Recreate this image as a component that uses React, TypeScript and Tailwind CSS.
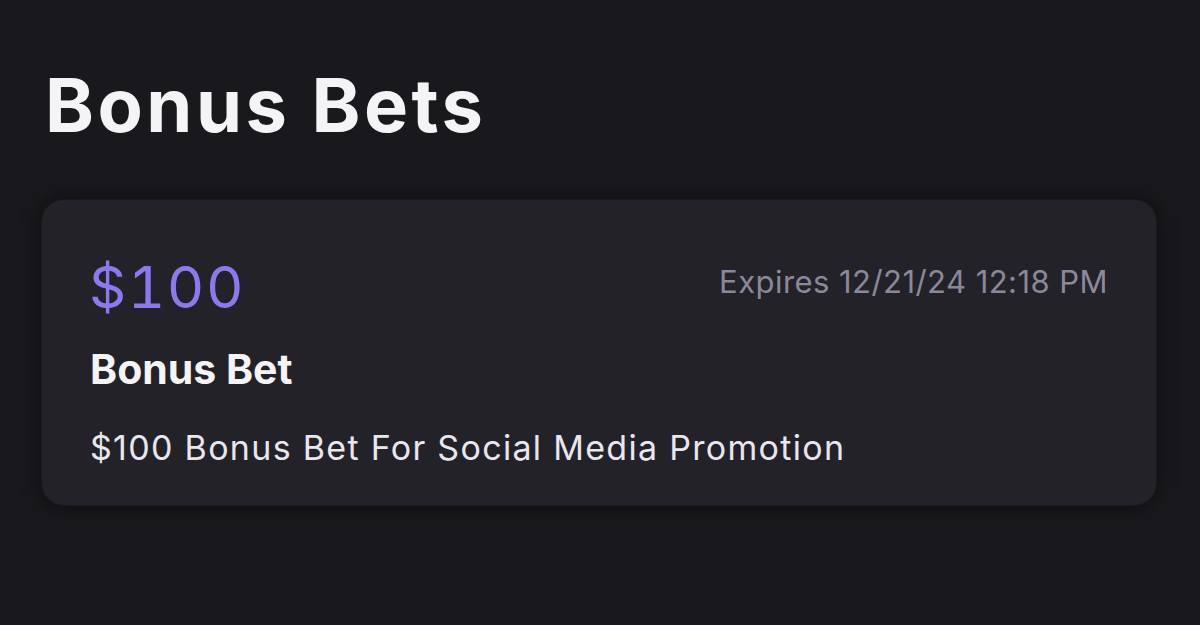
export default function App() {
  return (
    <div className="min-h-[625px] bg-[#19181c] px-[42px] pt-[68px] font-['Inter',sans-serif]">
      <h1 className="pl-[3px] text-[74px] font-bold leading-none tracking-[3.5px] text-[#f4f3f6]">
        Bonus Bets
      </h1>

      <div className="mt-[58px] w-[1114px] rounded-[22px] bg-[#232228] px-[48px] pb-[40px] pt-[58px] shadow-[0_0_18px_4px_rgba(0,0,0,0.35)] ring-1 ring-white/[0.03]">
        <div className="flex items-start justify-between">
          <span className="-ml-[1px] text-[58px] leading-none tracking-[1.5px] tabular-nums text-[#8d78f0]">$100</span>
          <span className="mt-[8px] text-[31px] leading-none tracking-[0.45px] text-[#8c889c]">
            Expires 12/21/24 12:18 PM
          </span>
        </div>
        <div className="mt-[33px] text-[41px] font-bold leading-none text-[#f4f3f6]">Bonus Bet</div>
        <p className="mt-[41px] text-[34px] leading-none tracking-[1.3px] text-[#e8e6ee]">
          $100 Bonus Bet For Social Media Promotion
        </p>
      </div>
    </div>
  )
}
